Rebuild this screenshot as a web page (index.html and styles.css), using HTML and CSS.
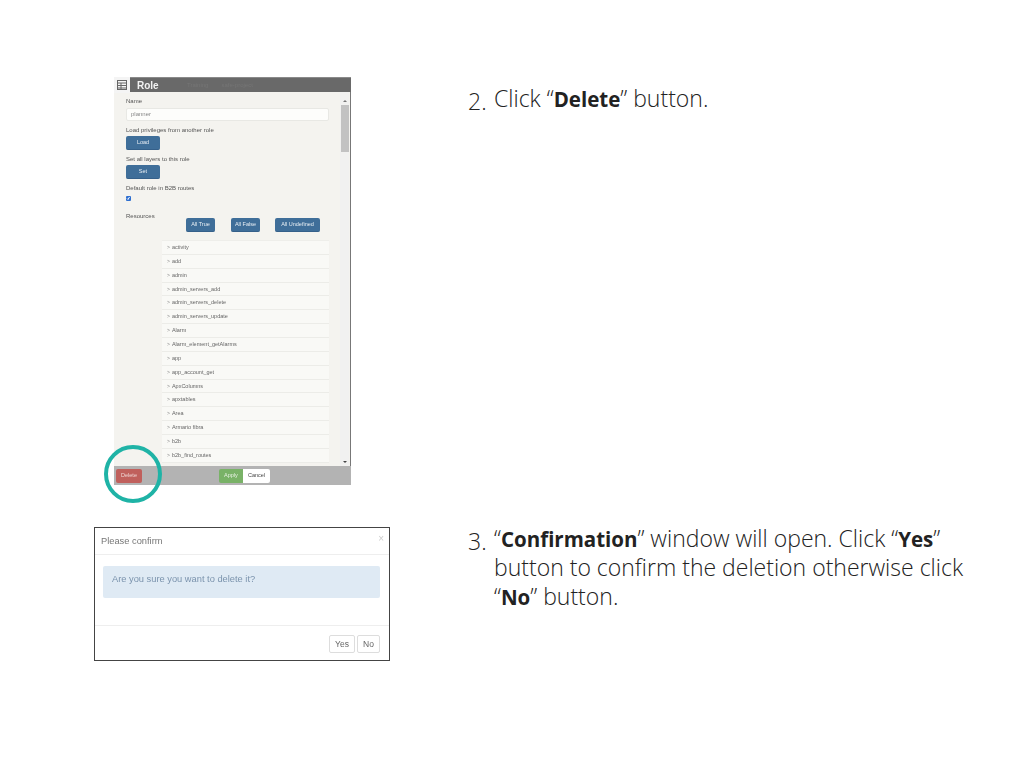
FILE: index.html
```html
<!DOCTYPE html>
<html lang="en">
<head>
    <meta charset="UTF-8">
    <title>Delete role</title>
    <link rel="stylesheet" href="styles.css">
</head>
<body>
    <div class="slide">
        <section class="step step-role">
            <div class="shot-col">
                <div class="role-window">
                    <div class="role-title">
                        <span class="role-icon">
                            <svg width="12" height="12" viewBox="0 0 12 12" fill="none" stroke="#666" stroke-width="1">
                                <rect x="1.5" y="1.5" width="9" height="9"/>
                                <path d="M1.5 4h9M1.5 6.5h9M1.5 9h9M5 4v6.500"/>
                            </svg>
                        </span>
                        <span class="role-name">Role</span>
                        <span class="role-behind">Training</span>
                        <span class="role-behind">safe-project</span>
                    </div>
                    <div class="role-main">
                        <div class="role-form">
                            <div class="lbl">Name</div>
                            <div class="name-input">planner</div>
                            <div class="lbl lbl-gap">Load privileges from another role</div>
                            <div class="btn btn-blue btn-wide">Load</div>
                            <div class="lbl lbl-gap">Set all layers to this role</div>
                            <div class="btn btn-blue btn-wide">Set</div>
                            <div class="lbl lbl-gap">Default role in B2B routes</div>
                            <div class="check">
                                <svg width="5" height="5" viewBox="0 0 5 5" fill="none" stroke="#fff" stroke-width="1"><path d="M1 2.500l1 1 1.500-2.500"/></svg>
                            </div>
                            <div class="res-row">
                                <div class="lbl res-lbl">Resources</div>
                                <div class="btn btn-blue btn-true">All True</div>
                                <div class="btn btn-blue btn-false">All False</div>
                                <div class="btn btn-blue btn-undef">All Undefined</div>
                            </div>
                            <ul class="res-list">
                                <li>activity</li>
                                <li>add</li>
                                <li>admin</li>
                                <li>admin_servers_add</li>
                                <li>admin_servers_delete</li>
                                <li>admin_servers_update</li>
                                <li>Alarm</li>
                                <li>Alarm_element_getAlarms</li>
                                <li>app</li>
                                <li>app_account_get</li>
                                <li>ApxColumns</li>
                                <li>apxtables</li>
                                <li>Area</li>
                                <li>Armario fibra</li>
                                <li>b2b</li>
                                <li>b2b_find_routes</li>
                            </ul>
                        </div>
                        <div class="scrollbar">
                            <span class="arrow-up"></span>
                            <span class="thumb"></span>
                            <span class="arrow-down"></span>
                        </div>
                    </div>
                    <div class="role-foot">
                        <div class="btn btn-delete">Delete</div>
                        <div class="foot-mid">
                            <div class="btn btn-apply">Apply</div>
                            <div class="btn btn-cancel">Cancel</div>
                        </div>
                    </div>
                    <div class="ring"></div>
                </div>
            </div>
            <div class="item">
                <span class="num">2.</span>
                <p>Click “<b>Delete</b>” button.</p>
            </div>
        </section>

        <section class="step step-confirm">
            <div class="shot-col">
                <div class="confirm">
                    <div class="confirm-head">
                        <span>Please confirm</span>
                        <span class="close">×</span>
                    </div>
                    <div class="confirm-body">
                        <div class="alert">Are you sure you want to delete it?</div>
                    </div>
                    <div class="confirm-foot">
                        <div class="btn-plain btn-yes">Yes</div>
                        <div class="btn-plain btn-no">No</div>
                    </div>
                </div>
            </div>
            <div class="item">
                <span class="num">3.</span>
                <p>“<b>Confirmation</b>” window will open. Click “<b>Yes</b>” button to confirm the deletion otherwise click “<b>No</b>” button.</p>
            </div>
        </section>
    </div>
</body>
</html>
```

FILE: styles.css
```css
/* page */
html, body {
    margin: 0;
    padding: 0;
    background: #fff;
}

.slide {
    width: 1024px;
    height: 768px;
    overflow: hidden;
    padding-top: 77px;
    box-sizing: border-box;
    font-family: "Open Sans", sans-serif;
    color: #222;
}

.step {
    display: flex;
}

.step-confirm {
    margin-top: 42px;
}

.shot-col {
    width: 468px;
    flex: none;
}

/* text on the right */
.item {
    display: flex;
    font-size: 23px;
    font-weight: 300;
    line-height: 29px;
}

.step-role .item {
    padding-top: 7px;
}

.step-confirm .item {
    margin-top: -3px;
}

.num {
    width: 26px;
    flex: none;
    position: relative;
    top: 3px;
}

.item p {
    margin: 0;
    width: 485px;
}

.item b {
    font-size: 20.500px;
    font-weight: 700;
    line-height: 1;
}

/* role window */
.role-window {
    position: relative;
    margin-left: 114px;
    width: 237px;
    height: 408px;
    display: flex;
    flex-direction: column;
    background: #f4f3ef;
    font-family: "Liberation Sans", sans-serif;
    font-size: 6px;
    color: #555;
    filter: blur(0.35px);
}

.role-title {
    height: 15px;
    flex: none;
    display: flex;
    align-items: center;
    background: #696969;
    border-top: 1px solid #8a8a8a;
    box-sizing: border-box;
    color: #757575;
}

.role-icon {
    width: 16px;
    height: 16px;
    background: #f4f4f4;
    display: flex;
    align-items: center;
    justify-content: center;
}

.role-name {
    width: 50px;
    margin-left: 7px;
    font-size: 10px;
    font-weight: 700;
    color: #f2f2f2;
}

.role-behind {
    margin-right: 13px;
}

.role-main {
    flex: 1;
    min-height: 0;
    display: flex;
}

.role-form {
    flex: 1;
    min-width: 0;
    padding: 5px 0 0 12px;
    overflow: hidden;
}

.lbl {
    line-height: 8px;
    height: 8px;
}

.lbl-gap {
    margin-top: 5px;
}

.name-input {
    width: 203px;
    height: 13px;
    margin-top: 3px;
    padding-left: 4px;
    box-sizing: border-box;
    background: #fdfdfb;
    border: 1px solid #e8e8e4;
    border-radius: 2px;
    line-height: 11px;
    color: #888;
}

.btn {
    border-radius: 2px;
    text-align: center;
    box-sizing: border-box;
    font-size: 5.500px;
}

.btn-blue {
    background: #3f6e99;
    border-bottom: 1px solid #35608a;
    color: #e8eef4;
    height: 14px;
    line-height: 13px;
}

.btn-wide {
    width: 34px;
    margin-top: 2px;
}

.check {
    width: 5px;
    height: 5px;
    margin-top: 4px;
    background: #2f6fd0;
    border-radius: 1px;
    display: flex;
}

.res-row {
    display: flex;
    margin-top: 11px;
    height: 28px;
}

.res-lbl {
    width: 60px;
}

.res-row .btn {
    margin-top: 6px;
}

.btn-true {
    width: 29px;
}

.btn-false {
    width: 29px;
    margin-left: 16px;
}

.btn-undef {
    width: 45px;
    margin-left: 15px;
}

.res-list {
    list-style: none;
    margin: 0 0 0 36px;
    padding: 0;
    width: 167px;
    background: #f9f9f6;
    border-top: 1px solid #eeeeea;
    font-size: 5.500px;
}

.res-list li {
    height: 13.870px;
    line-height: 12px;
    padding-left: 5px;
    box-sizing: border-box;
    border-bottom: 1px solid #ecece8;
    color: #666;
}

.res-list li::before {
    content: ">";
    margin-right: 2px;
    color: #888;
    font-size: 5px;
}

/* scrollbar */
.scrollbar {
    width: 9px;
    flex: none;
    margin-right: 1px;
    background: #f1f1f0;
    display: flex;
    flex-direction: column;
    align-items: center;
}

.arrow-up {
    margin-top: 8px;
    border: 2px solid transparent;
    border-top: 0;
    border-bottom-color: #777;
}

.thumb {
    width: 8px;
    height: 47px;
    margin-top: 3px;
    background: #c2c2c2;
}

.arrow-down {
    margin-top: auto;
    margin-bottom: 3px;
    border: 2px solid transparent;
    border-bottom: 0;
    border-top-color: #444;
}

.role-main::after {
    content: "";
    width: 1px;
    background: #777;
}

/* footer of role window */
.role-foot {
    height: 19px;
    flex: none;
    display: flex;
    align-items: center;
    background: #b3b3b3;
    padding-left: 2px;
}

.btn-delete {
    width: 26px;
    height: 14px;
    line-height: 13px;
    background: #c0605c;
    color: #f0d8d6;
}

.foot-mid {
    display: flex;
    margin-left: 77px;
}

.btn-apply {
    width: 24px;
    height: 14px;
    line-height: 13px;
    background: #79b267;
    color: #e8f2e4;
    border-radius: 2px 0 0 2px;
}

.btn-cancel {
    width: 27px;
    height: 14px;
    line-height: 13px;
    background: #fff;
    color: #444;
    border-radius: 0 2px 2px 0;
}

/* teal circle round the delete button */
.ring {
    position: absolute;
    left: -10px;
    top: 368px;
    width: 58px;
    height: 58px;
    box-sizing: border-box;
    border: 4px solid #1fb3a6;
    border-radius: 50%;
}

/* confirm dialog */
.confirm {
    margin-left: 94px;
    width: 296px;
    height: 134px;
    box-sizing: border-box;
    border: 1px solid #444;
    display: flex;
    flex-direction: column;
    font-family: "Liberation Sans", sans-serif;
    background: #fff;
    filter: blur(0.25px);
}

.confirm-head {
    height: 27px;
    flex: none;
    display: flex;
    justify-content: space-between;
    align-items: center;
    padding: 0 5px 1px 6px;
    box-sizing: border-box;
    border-bottom: 1px solid #eee;
    font-size: 9.300px;
    color: #777;
}

.close {
    font-size: 10px;
    color: #ccc;
    margin-top: -5px;
}

.confirm-body {
    flex: 1;
    padding: 11px 9px 0 8px;
    border-bottom: 1px solid #eee;
}

.alert {
    height: 32px;
    padding: 8px 9px 0;
    box-sizing: border-box;
    background: #dfeaf4;
    border-radius: 2px;
    font-size: 9.300px;
    color: #7b93ad;
}

.confirm-foot {
    height: 34px;
    flex: none;
    display: flex;
    justify-content: flex-end;
    align-items: flex-start;
    gap: 2px;
    padding: 9px 9px 0 0;
    box-sizing: border-box;
}

.btn-plain {
    height: 18px;
    line-height: 16px;
    text-align: center;
    border: 1px solid #ddd;
    border-radius: 2px;
    box-sizing: border-box;
    font-size: 8.500px;
    color: #666;
}

.btn-yes {
    width: 26px;
}

.btn-no {
    width: 23px;
}
```
